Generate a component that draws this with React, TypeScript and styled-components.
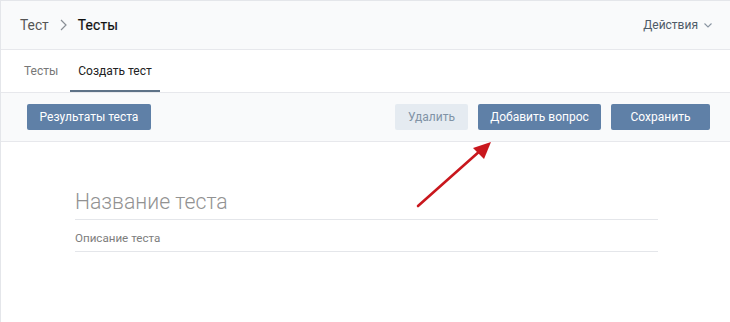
import React from "react";
import styled, { createGlobalStyle } from "styled-components";

const Global = createGlobalStyle`
  html, body { margin: 0; padding: 0; background: #fff; }
  body { font-family: Roboto, "Open Sans", Arial, sans-serif; -webkit-font-smoothing: antialiased; }
  * { box-sizing: border-box; }
`;

const Page = styled.div`
  position: relative;
  width: 730px;
  height: 322px;
  border-top: 1px solid #e4e6ea;
  border-left: 1px solid #e4e6ea;
  background: #fff;
  overflow: hidden;
`;

const Header = styled.div`
  display: flex;
  align-items: center;
  justify-content: space-between;
  height: 49px;
  padding: 0 18px 0 19px;
  background: #f9fafb;
  border-bottom: 1px solid #e7e8ec;
`;

const Crumbs = styled.div`
  display: flex;
  align-items: center;
  gap: 11px;
  font-size: 13.8px;
`;

const Crumb = styled.span<{ $current?: boolean }>`
  color: ${(p) => (p.$current ? "#111" : "#555")};
  font-weight: 400;
  letter-spacing: ${(p) => (p.$current ? "0.2px" : "0")};
  -webkit-text-stroke: ${(p) => (p.$current ? "0.2px #111" : "0")};
`;

const Actions = styled.div`
  display: flex;
  align-items: center;
  gap: 6px;
  font-size: 12px;
  color: #4f5b68;
`;

const Tabs = styled.div`
  display: flex;
  gap: 4px;
  height: 43px;
  padding-left: 15px;
  border-bottom: 1px solid #e7e8ec;
`;

const Tab = styled.div<{ $active?: boolean }>`
  display: flex;
  align-items: center;
  padding: 2px 8px 0;
  font-size: 12px;
  color: ${(p) => (p.$active ? "#222" : "#777")};
  border-bottom: 2px solid ${(p) => (p.$active ? "#5e7287" : "transparent")};
`;

const Toolbar = styled.div`
  display: flex;
  align-items: center;
  height: 49px;
  padding: 0 20px 0 26px;
  background: #f9fafb;
  border-bottom: 1px solid #e7e8ec;
`;

const ButtonGroup = styled.div`
  display: flex;
  gap: 10px;
  margin-left: auto;
`;

const Button = styled.button<{ $muted?: boolean; $w: number }>`
  height: 26px;
  width: ${(p) => p.$w}px;
  border: none;
  border-radius: 2px;
  font-family: Roboto, Arial, sans-serif;
  font-size: 12px;
  padding: 0;
  background: ${(p) => (p.$muted ? "#e5ebf1" : "#5f80a7")};
  color: ${(p) => (p.$muted ? "#8193a6" : "#fff")};
  cursor: pointer;
`;

const Form = styled.div`
  display: flex;
  flex-direction: column;
  margin: 46px 72px 0 74px;
`;

const Field = styled.div<{ $big?: boolean }>`
  display: flex;
  align-items: flex-end;
  height: 32px;
  padding-bottom: ${(p) => (p.$big ? 5 : 6)}px;
  border-bottom: 1px solid #e4e6ea;
  font-size: ${(p) => (p.$big ? "21.2px" : "11.6px")};
  font-weight: ${(p) => (p.$big ? 300 : 400)};
  color: ${(p) => (p.$big ? "#929292" : "#7d7d7d")};
`;

const Arrow = styled.svg`
  position: absolute;
  left: 410px;
  top: 136px;
`;

export default function App() {
  return (
    <>
      <Global />
      <Page>
        <Header>
          <Crumbs>
            <Crumb>Тест</Crumb>
            <svg width="7" height="12" viewBox="0 0 7 12">
              <path d="M1 1l5 5-5 5" fill="none" stroke="#8a8f96" strokeWidth="1.2" />
            </svg>
            <Crumb $current>Тесты</Crumb>
          </Crumbs>
          <Actions>
            Действия
            <svg width="8" height="5" viewBox="0 0 8 5">
              <path d="M0.5 0.5l3.5 3.5 3.5-3.5" fill="none" stroke="#8a95a2" strokeWidth="1.1" />
            </svg>
          </Actions>
        </Header>
        <Tabs>
          <Tab>Тесты</Tab>
          <Tab $active>Создать тест</Tab>
        </Tabs>
        <Toolbar>
          <Button $w={124}>Результаты теста</Button>
          <ButtonGroup>
            <Button $muted $w={73}>Удалить</Button>
            <Button $w={123}>Добавить вопрос</Button>
            <Button $w={99}>Сохранить</Button>
          </ButtonGroup>
        </Toolbar>
        <Form>
          <Field $big>Название теста</Field>
          <Field>Описание теста</Field>
        </Form>
        <Arrow width="90" height="80" viewBox="0 0 90 80">
          <path d="M7 69L70 13" stroke="#c9171d" strokeWidth="2.6" strokeLinecap="round" />
          <path d="M80 5L62 11L73 22Z" fill="#c9171d" />
        </Arrow>
      </Page>
    </>
  );
}
